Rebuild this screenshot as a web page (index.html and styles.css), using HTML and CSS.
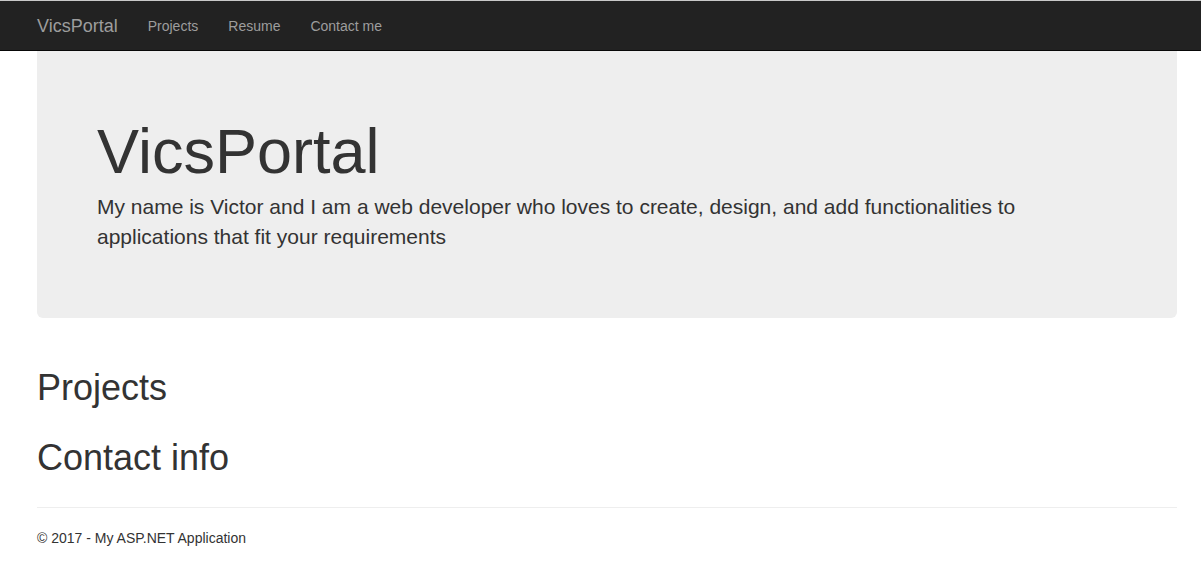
FILE: index.html
```html
<!DOCTYPE html>
<html>
<head>
<meta charset="utf-8">
<title>VicsPortal</title>
<link rel="stylesheet" href="styles.css">
</head>
<body>
<nav class="navbar">
  <div class="container nav-inner">
    <a class="brand" href="#">VicsPortal</a>
    <ul class="nav">
      <li><a href="#">Projects</a></li>
      <li><a href="#">Resume</a></li>
      <li><a href="#">Contact me</a></li>
    </ul>
  </div>
</nav>
<div class="container body-content">
  <div class="jumbotron">
    <h1>VicsPortal</h1>
    <p class="lead">My name is Victor and I am a web developer who loves to create, design, and add functionalities to applications that fit your requirements</p>
  </div>
  <section class="section">
    <h1>Projects</h1>
  </section>
  <section class="section contact">
    <h1>Contact info</h1>
  </section>
  <hr class="rule">
  <footer class="footer">
    <p>&copy; 2017 - My ASP.NET Application</p>
  </footer>
</div>
</body>
</html>
```

FILE: styles.css
```css
* { box-sizing: border-box; }
html, body { margin: 0; padding: 0; }
body {
  font-family: "Liberation Sans", Arial, Helvetica, sans-serif;
  font-size: 14px;
  line-height: 1.42857;
  color: #333;
  background: #fff;
}
.navbar {
  background: #222;
  border-top: 1px solid #c9c9c9;
  border-bottom: 1px solid #080808;
  height: 51px;
}
.container {
  width: 1140px;
  margin-left: 37px;
}
.nav-inner {
  display: flex;
  align-items: center;
  height: 49px;
}
.brand {
  font-size: 18px;
  line-height: 20px;
  color: #9d9d9d;
  text-decoration: none;
  padding: 15px 15px 15px 0;
}
.nav {
  display: flex;
  list-style: none;
  margin: 0;
  padding: 0;
}
.nav a {
  display: block;
  padding: 15px;
  line-height: 20px;
  color: #9d9d9d;
  text-decoration: none;
}
.jumbotron {
  background: #eee;
  border-radius: 0 0 6px 6px;
  padding: 48px 60px;
  margin-bottom: 50px;
  height: 267px;
}
.jumbotron h1 {
  font-size: 63px;
  font-weight: 500;
  line-height: 1.1;
  margin: 17.5px 0 6.5px;
  color: #333;
}
.lead {
  font-size: 21px;
  line-height: 1.4;
  margin: 0 0 15px;
  font-weight: 200;
  max-width: 940px;
}
.section h1 {
  font-size: 36px;
  font-weight: 500;
  line-height: 1.1;
  margin: 20px 0 10px;
}
.contact h1 { margin-top: 30px; }
.rule {
  border: 0;
  border-top: 1px solid #eee;
  margin: 30px 0 20px;
}
.footer p {
  margin: 0 0 10px;
  line-height: 20px;
}
```
